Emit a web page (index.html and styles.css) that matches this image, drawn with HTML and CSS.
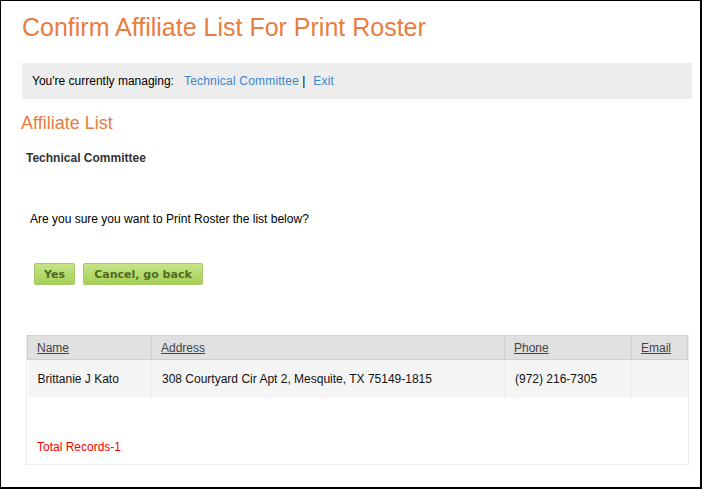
FILE: index.html
```html
<!DOCTYPE html>
<html>
<head>
<meta charset="utf-8">
<link rel="stylesheet" href="styles.css">
</head>
<body>
<div class="frame">
  <h1 class="title">Confirm Affiliate List For Print Roster</h1>
  <div class="managing">
    <span class="label">You're currently managing:</span>
    <a class="link" href="#">Technical Committee</a><span class="sep">|</span><a class="link" href="#">Exit</a>
  </div>
  <h2 class="subtitle">Affiliate List</h2>
  <div class="committee">Technical Committee</div>
  <p class="question">Are you sure you want to Print Roster the list below?</p>
  <div class="buttons">
    <button class="btn btn-yes">Yes</button>
    <button class="btn btn-cancel">Cancel, go back</button>
  </div>
  <div class="grid">
    <table class="table">
      <colgroup>
        <col class="c-name"><col class="c-addr"><col class="c-phone"><col class="c-email">
      </colgroup>
      <thead>
        <tr>
          <th><a href="#">Name</a></th>
          <th><a href="#">Address</a></th>
          <th><a href="#">Phone</a></th>
          <th><a href="#">Email</a></th>
        </tr>
      </thead>
      <tbody>
        <tr>
          <td>Brittanie J Kato</td>
          <td>308 Courtyard Cir Apt 2, Mesquite, TX 75149-1815</td>
          <td>(972) 216-7305</td>
          <td></td>
        </tr>
      </tbody>
    </table>
    <div class="total">Total Records-1</div>
  </div>
</div>
</body>
</html>
```
FILE: styles.css
```css
html, body {
  margin: 0;
  padding: 0;
  background: #fff;
}
body {
  font-family: Arial, "Liberation Sans", sans-serif;
  font-size: 12px;
  color: #000;
}
.frame {
  box-sizing: border-box;
  width: 702px;
  height: 489px;
  border-top: 1px solid #000;
  border-left: 1px solid #000;
  border-right: 2px solid #000;
  border-bottom: 2px solid #000;
  padding: 0 8px 0 21px;
  overflow: hidden;
}
.title {
  margin: 12px 0 0 0;
  font-size: 25px;
  font-weight: normal;
  color: #e87d3e;
  line-height: 28px;
}
.managing {
  margin-top: 22px;
  height: 36px;
  background: #ededed;
  display: flex;
  align-items: center;
  padding-left: 10px;
  font-size: 12px;
}
.label {
  margin-right: 10px;
}
.link {
  color: #3b87c9;
  text-decoration: none;
  letter-spacing: 0.2px;
}
.sep {
  margin: 0 8px 0 3px;
  color: #000;
}
.subtitle {
  margin: 14px 0 0 -1px;
  font-size: 18px;
  font-weight: normal;
  color: #e87d3e;
  line-height: 20px;
}
.committee {
  margin: 18px 0 0 4px;
  font-weight: bold;
  color: #333;
  line-height: 14px;
}
.question {
  margin: 47px 0 0 8px;
  line-height: 14px;
}
.buttons {
  display: flex;
  gap: 8px;
  margin: 37px 0 0 12px;
}
.btn {
  height: 22px;
  box-sizing: border-box;
  padding: 0 4px;
  border: 1px solid #a6c96a;
  border-radius: 2px;
  background: linear-gradient(#c6e487, #a6d056);
  color: #4f6b22;
  font-family: Verdana, "DejaVu Sans", sans-serif;
  font-weight: bold;
  font-size: 11px;
  cursor: pointer;
}
.btn-yes { width: 41px; }
.btn-cancel { width: 120px; }
.grid {
  margin: 50px 3px 0 4px;
  border: 1px solid #ececec;
  border-top: none;
  height: 130px;
  box-sizing: border-box;
}
.table {
  width: 100%;
  border-collapse: collapse;
  table-layout: fixed;
}
.c-name { width: 124px; }
.c-addr { width: 353px; }
.c-phone { width: 127px; }
.c-email { width: auto; }
.table th {
  background: #e0e0e0;
  border: 1px solid #cfcfcf;
  height: 24px;
  box-sizing: border-box;
  text-align: left;
  font-weight: normal;
  padding: 0 0 0 9px;
}
.table th a {
  color: #444;
  text-decoration: underline;
}
.table td {
  background: #f5f5f5;
  height: 38px;
  padding: 0 0 0 10px;
  border-left: 1px solid #ececec;
  color: #111;
}
.table td:first-child {
  border-left: none;
}
.total {
  color: #f00;
  margin: 42px 0 0 10px;
  line-height: 14px;
}
```
